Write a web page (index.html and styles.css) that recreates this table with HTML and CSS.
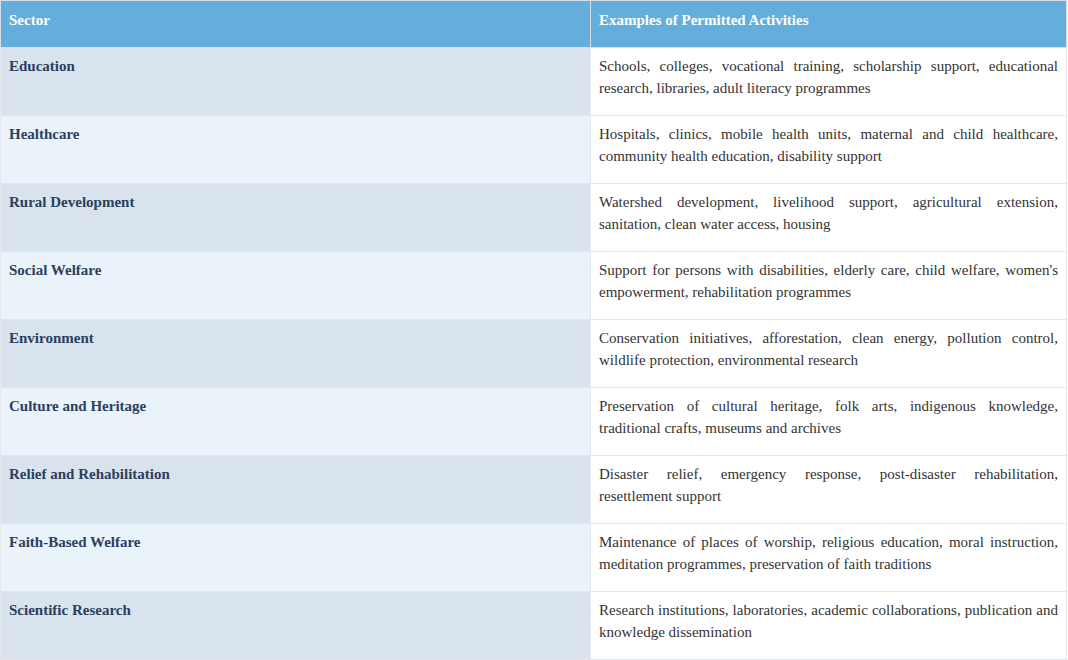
FILE: index.html
```html
<!DOCTYPE html>
<html lang="en">
<head>
<meta charset="utf-8">
<title>Permitted Activities by Sector</title>
<link rel="stylesheet" href="styles.css">
</head>
<body>
<table class="sectors">
  <colgroup>
    <col class="col-sector">
    <col class="col-examples">
  </colgroup>
  <thead>
    <tr>
      <th>Sector</th>
      <th>Examples of Permitted Activities</th>
    </tr>
  </thead>
  <tbody>
    <tr>
      <td class="sector">Education</td>
      <td class="examples">Schools, colleges, vocational training, scholarship support, educational research, libraries, adult literacy programmes</td>
    </tr>
    <tr>
      <td class="sector">Healthcare</td>
      <td class="examples">Hospitals, clinics, mobile health units, maternal and child healthcare, community health education, disability support</td>
    </tr>
    <tr>
      <td class="sector">Rural Development</td>
      <td class="examples">Watershed development, livelihood support, agricultural extension, sanitation, clean water access, housing</td>
    </tr>
    <tr>
      <td class="sector">Social Welfare</td>
      <td class="examples">Support for persons with disabilities, elderly care, child welfare, women's empowerment, rehabilitation programmes</td>
    </tr>
    <tr>
      <td class="sector">Environment</td>
      <td class="examples">Conservation initiatives, afforestation, clean energy, pollution control, wildlife protection, environmental research</td>
    </tr>
    <tr>
      <td class="sector">Culture and Heritage</td>
      <td class="examples">Preservation of cultural heritage, folk arts, indigenous knowledge, traditional crafts, museums and archives</td>
    </tr>
    <tr>
      <td class="sector">Relief and Rehabilitation</td>
      <td class="examples">Disaster relief, emergency response, post-disaster rehabilitation, resettlement support</td>
    </tr>
    <tr>
      <td class="sector">Faith-Based Welfare</td>
      <td class="examples">Maintenance of places of worship, religious education, moral instruction, meditation programmes, preservation of faith traditions</td>
    </tr>
    <tr>
      <td class="sector">Scientific Research</td>
      <td class="examples">Research institutions, laboratories, academic collaborations, publication and knowledge dissemination</td>
    </tr>
  </tbody>
</table>
</body>
</html>
```

FILE: styles.css
```css
html, body {
  margin: 0;
  padding: 0;
  background: #ffffff;
}

body {
  font-family: "Liberation Serif", "Times New Roman", serif;
  font-size: 15px;
  line-height: 22px;
  color: #333333;
}

.sectors {
  width: 1066px;
  border-collapse: collapse;
  table-layout: fixed;
  border: 1px solid #dfe3e8;
}

.col-sector {
  width: 590px;
}

.col-examples {
  width: 476px;
}

.sectors th,
.sectors td {
  padding: 7px 8px 16px;
  vertical-align: top;
  border: 1px solid #e3e6ea;
  text-align: left;
}

.sectors th {
  padding-top: 8px;
  background: #63aedd;
  color: #ffffff;
  font-weight: bold;
  border-color: #d9dee4;
}

.sectors .sector {
  font-weight: bold;
  color: #2b3f5e;
}

.sectors tbody tr:nth-child(odd) .sector {
  background: #d9e3ed;
}

.sectors tbody tr:nth-child(even) .sector {
  background: #eaf2fa;
}

.sectors .examples {
  background: #ffffff;
  text-align: justify;
}
```
